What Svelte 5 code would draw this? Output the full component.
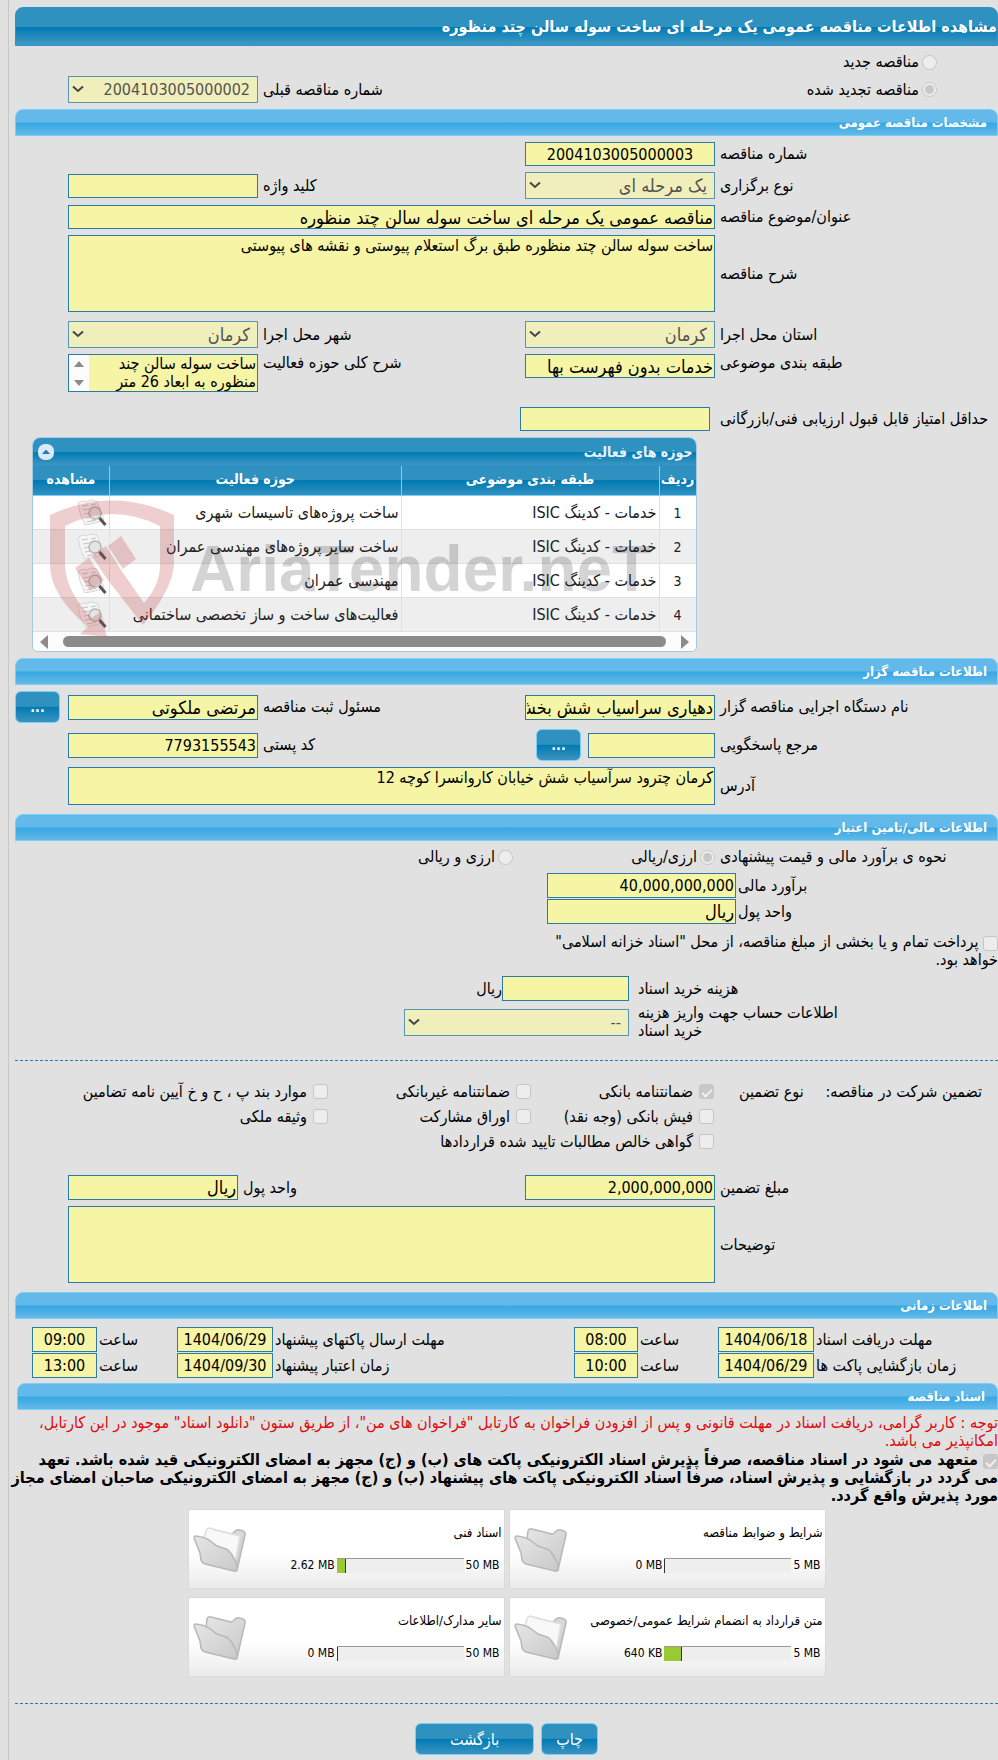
<script lang="ts">
  const activities = [
    "ساخت پروژه‌های تاسیسات شهری",
    "ساخت سایر پروژه‌های مهندسی عمران",
    "مهندسی عمران",
    "فعالیت‌های ساخت و ساز تخصصی ساختمانی",
  ];

  const guarantees = [
    { id: "bank", label: "ضمانتنامه بانکی", checked: true },
    { id: "nonbank", label: "ضمانتنامه غیربانکی" },
    { id: "article", label: "موارد بند پ ، ح و خ آیین نامه تضامین" },
    { id: "cash", label: "فیش بانکی (وجه نقد)" },
    { id: "bonds", label: "اوراق مشارکت" },
    { id: "estate", label: "وثیقه ملکی" },
    { id: "claims", label: "گواهی خالص مطالبات تایید شده قراردادها", wide: true },
  ];

  const schedule = [
    { id: "receive", label: "مهلت دریافت اسناد", date: "1404/06/18", time: "08:00" },
    { id: "send", label: "مهلت ارسال پاکتهای پیشنهاد", date: "1404/06/29", time: "09:00" },
    { id: "open", label: "زمان بازگشایی پاکت ها", date: "1404/06/29", time: "10:00" },
    { id: "valid", label: "زمان اعتبار پیشنهاد", date: "1404/09/30", time: "13:00" },
  ];

  const documents = [
    { title: "شرایط و ضوابط مناقصه", used: "0 MB", max: "5 MB", percent: 0 },
    { title: "اسناد فنی", used: "2.62 MB", max: "50 MB", percent: 7 },
    { title: "متن قرارداد به انضمام شرایط عمومی/خصوصی", used: "640 KB", max: "5 MB", percent: 13 },
    { title: "سایر مدارک/اطلاعات", used: "0 MB", max: "50 MB", percent: 0 },
  ];
</script>

{#snippet dropdown(id: string, value: string, isText = true)}
  <span class="dropdown">
    <select {id} class:text={isText} disabled>
      <option>{value}</option>
    </select>
    <svg viewBox="0 0 12 8" aria-hidden="true"><path d="M1 1.500 6 6l5-4.500" /></svg>
  </span>
{/snippet}

<main>
  <h1>مشاهده اطلاعات مناقصه عمومی یک مرحله ای ساخت سوله سالن چتد منظوره</h1>

  <div class="kind">
    <div class="row">
      <div class="choice">
        <input type="radio" id="kindNew" name="kind" disabled />
        <label for="kindNew">مناقصه جدید</label>
      </div>
    </div>
    <div class="row">
      <div class="choice">
        <input type="radio" id="kindRenewed" name="kind" checked disabled />
        <label for="kindRenewed">مناقصه تجدید شده</label>
      </div>
      <label class="caption" for="previous">شماره مناقصه قبلی</label>
      {@render dropdown("previous", "2004103005000002", false)}
    </div>
  </div>

  <h2>مشخصات مناقصه عمومی</h2>
  <section class="rows">
    <div class="row">
      <label class="caption" for="number">شماره مناقصه</label>
      <input class="centered" id="number" value="2004103005000003" readonly />
    </div>
    <div class="row">
      <label class="caption" for="holding">نوع برگزاری</label>
      {@render dropdown("holding", "یک مرحله ای")}
      <label class="caption" for="keyword">کلید واژه</label>
      <input id="keyword" readonly />
    </div>
    <div class="row">
      <label class="caption" for="subject">عنوان/موضوع مناقصه</label>
      <input class="wide text" id="subject" value="مناقصه عمومی یک مرحله ای ساخت سوله سالن چتد منظوره" readonly />
    </div>
    <div class="row tall">
      <label class="caption" for="description">شرح مناقصه</label>
      <textarea class="wide big" id="description" readonly>ساخت سوله سالن چتد منظوره طبق برگ استعلام پیوستی و نقشه های پیوستی</textarea>
    </div>
    <div class="row">
      <label class="caption" for="province">استان محل اجرا</label>
      {@render dropdown("province", "کرمان")}
      <label class="caption" for="city">شهر محل اجرا</label>
      {@render dropdown("city", "کرمان")}
    </div>
    <div class="row top">
      <label class="caption" for="category">طبقه بندی موضوعی</label>
      <input class="text" id="category" value="خدمات بدون فهرست بها" readonly />
      <label class="caption" for="scope">شرح کلی حوزه فعالیت</label>
      <div class="scroller">
        <textarea id="scope" readonly>ساخت سوله سالن چند منظوره به ابعاد 26 متر</textarea>
        <svg viewBox="0 0 20 36" aria-hidden="true"><path d="M5 12h10l-5-6zM5 25h10l-5 6z" /></svg>
      </div>
    </div>
    <div class="row score">
      <label class="caption" for="score">حداقل امتیاز قابل قبول ارزیابی فنی/بازرگانی</label>
      <input id="score" readonly />
    </div>
  </section>

  <div class="activities">
    <div class="gridTitle">
      <span>حوزه های فعالیت</span>
      <button class="collapse" aria-label="بستن">
        <svg viewBox="0 0 16 16"><path d="M4 10h8L8 5.500z" /></svg>
      </button>
    </div>
    <table>
      <thead>
        <tr>
          <th class="index">ردیف</th>
          <th class="category">طبقه بندی موضوعی</th>
          <th>حوزه فعالیت</th>
          <th class="view">مشاهده</th>
        </tr>
      </thead>
      <tbody>
        {#each activities as activity, i}
          <tr>
            <td class="index">{i + 1}</td>
            <td>خدمات - کدینگ ISIC</td>
            <td>{activity}</td>
            <td class="view">
              <svg viewBox="0 0 30 28" aria-hidden="true">
                <path class="sheet" d="M1 4 6 2l4 1 3-2 7 1 7 19-9 3-10 2Q2 15 1 4z" />
                <path class="lines" d="m5 7 6-1M6 11l6-1M7 15l6-1M8 19l7-1M10 23l9-2M14 6l5-1" />
                <circle cx="18" cy="14" r="6" />
                <path class="handle" d="m22.500 19 6 7" />
              </svg>
            </td>
          </tr>
        {/each}
      </tbody>
    </table>
    <div class="track">
      <svg viewBox="0 0 8 14" aria-hidden="true"><path d="M0 0v14l8-7z" /></svg>
      <div class="thumb"></div>
      <svg viewBox="0 0 8 14" aria-hidden="true"><path d="M8 0v14L0 7z" /></svg>
    </div>
    <div class="watermark">
      <svg viewBox="0 0 126 138" aria-hidden="true">
        <path d="M0 15Q62-14 124 15V65Q122 90 93 125L57 79 42 56 56 46 71 70 94 103Q110 85 110 65V26Q62 2 15 26V65Q16 92 42 118L50 112 57 137 30 134 38 127Q0 95 0 65z" />
        <path d="m25 68 14-10 15 22-14 10zM58 46l13-10 15 23-13 10z" />
      </svg>
      <span>AriaTender.neT</span>
    </div>
  </div>

  <h2>اطلاعات مناقصه گزار</h2>
  <section class="holder">
    <div class="row">
      <label class="caption" for="agency">نام دستگاه اجرایی مناقصه گزار</label>
      <input class="text" id="agency" value="دهیاری سراسیاب شش بخش مرکزی" readonly />
      <label class="caption" for="registrar">مسئول ثبت مناقصه</label>
      <input class="text" id="registrar" value="مرتضی ملکوتی" readonly />
      <button class="more">...</button>
    </div>
    <div class="row">
      <label class="caption" for="contact">مرجع پاسخگویی</label>
      <div class="withButton">
        <input id="contact" readonly />
        <button class="more">...</button>
      </div>
      <label class="caption" for="postal">کد پستی</label>
      <input id="postal" value="7793155543" readonly />
    </div>
    <div class="row">
      <label class="caption" for="address">آدرس</label>
      <textarea class="wide" id="address" readonly>کرمان چترود سرآسیاب شش خیابان کاروانسرا کوچه 12</textarea>
    </div>
  </section>

  <h2>اطلاعات مالی/تامین اعتبار</h2>
  <section class="finance">
    <div class="method">
      <span class="caption">نحوه ی برآورد مالی و قیمت پیشنهادی</span>
      <div class="choice">
        <input type="radio" id="single" name="currency" checked disabled />
        <label for="single">ارزی/ریالی</label>
      </div>
      <div class="choice">
        <input type="radio" id="both" name="currency" disabled />
        <label for="both">ارزی و ریالی</label>
      </div>
    </div>
    <div class="estimate">
      <label class="caption" for="estimate">برآورد مالی</label>
      <input id="estimate" value="40,000,000,000" readonly />
      <label class="caption" for="unit">واحد پول</label>
      <input class="text" id="unit" value="ریال" readonly />
    </div>
    <div class="treasury">
      <input type="checkbox" id="treasury" disabled />
      <label for="treasury">پرداخت تمام و یا بخشی از مبلغ مناقصه، از محل "اسناد خزانه اسلامی" خواهد بود.</label>
    </div>
    <div class="fees">
      <label class="caption" for="fee">هزینه خرید اسناد</label>
      <div class="fee"><input id="fee" readonly />ریال</div>
      <label class="caption" for="account">اطلاعات حساب جهت واریز هزینه خرید اسناد</label>
      {@render dropdown("account", "--", false)}
    </div>
  </section>

  <hr />

  <section class="guarantee">
    <div class="guaranteeTypes">
      <div class="guaranteeTitle"><span>تضمین شرکت در مناقصه:</span><span>نوع تضمین</span></div>
      <div class="options">
        {#each guarantees as item}
          <div class="choice" class:span={item.wide}>
            <input type="checkbox" id={item.id} checked={item.checked} disabled />
            <label for={item.id}>{item.label}</label>
          </div>
        {/each}
      </div>
    </div>
    <div class="row amount">
      <label class="caption" for="amount">مبلغ تضمین</label>
      <input id="amount" value="2,000,000,000" readonly />
      <label class="caption" for="amountUnit">واحد پول</label>
      <input class="text" id="amountUnit" value="ریال" readonly />
    </div>
    <div class="row">
      <label class="caption" for="notes">توضیحات</label>
      <textarea class="wide big" id="notes" readonly></textarea>
    </div>
  </section>

  <h2>اطلاعات زمانی</h2>
  <section class="schedule">
    {#each schedule as item}
      <label class="caption" for="{item.id}Date">{item.label}</label>
      <input class="centered" id="{item.id}Date" value={item.date} readonly />
      <label class="caption" for="{item.id}Time">ساعت</label>
      <input class="centered" id="{item.id}Time" value={item.time} readonly />
    {/each}
  </section>

  <h2 class="inset">اسناد مناقصه</h2>
  <section class="documents">
    <p class="notice">توجه : کاربر گرامی، دریافت اسناد در مهلت قانونی و پس از افزودن فراخوان به کارتابل "فراخوان های من"، از طریق ستون "دانلود اسناد" موجود در این کارتابل، امکانپذیر می باشد.</p>
    <div class="pledge">
      <input type="checkbox" id="pledge" checked disabled />
      <label for="pledge">
        متعهد می شود در اسناد مناقصه، صرفاً پذیرش اسناد الکترونیکی پاکت های (ب) و (ج) مجهز به امضای الکترونیکی قید شده باشد. تعهد<br />
        می گردد در بازگشایی و پذیرش اسناد، صرفاً اسناد الکترونیکی پاکت های پیشنهاد (ب) و (ج) مجهز به امضای الکترونیکی صاحبان امضای مجاز<br />
        مورد پذیرش واقع گردد.
      </label>
    </div>
    <div class="cards">
      {#each documents as doc}
        <article>
          <div class="info">
            <h3>{doc.title}</h3>
            <div class="usage">
              <span>{doc.max}</span>
              <div class="meter"><div class="fill" style="width: {doc.percent}%"></div></div>
              <span>{doc.used}</span>
            </div>
          </div>
          <svg viewBox="0 0 54 48" aria-hidden="true">
            <defs>
              <linearGradient id="folder" x1="0" y1="0" x2="1" y2="1">
                <stop offset="0" stop-color="#e6e6e6" />
                <stop offset="1" stop-color="#c9c9c9" />
              </linearGradient>
            </defs>
            <path class="back" d="M11 30 14 4q1-3 4-2l20 5q2 0 3-2 3-3 6-2 6 1 5 5L44 43z" />
            {#if doc.percent > 0}
              <path class="paper" d="m10 14 3-10q1-3 4-3l5 2 25 6-5 27z" />
            {/if}
            <path class="front" d="M3 9q8 1 13 4l8 6 9 3q3 1 6 6l4 7q2 4 1 8-1 2-3 1L12 37q-3-1-4-4L7 26 1 11q0-2 2-2z" />
          </svg>
        </article>
      {/each}
    </div>
  </section>

  <hr />

  <footer>
    <button>چاپ</button>
    <button class="return">بازگشت</button>
  </footer>
</main>

<style>
  :global(body) {
    background: #e1e1e1;
  }

  main {
    direction: rtl;
    box-sizing: border-box;
    margin-left: 8px;
    padding: 7px 0 5px 6px;
    border-left: 1px solid #c8c8c8;
    overflow: hidden;
    font: 16px/18px "DejaVu Sans Condensed", "DejaVu Sans", sans-serif;
    color: #000;
  }

  h1,
  h2,
  h3,
  p {
    margin: 0;
  }

  h1 {
    box-sizing: border-box;
    height: 39px;
    border: 1px solid #318fd0;
    border-radius: 8px 8px 0 0;
    background: linear-gradient(#2f91bf 50%, #007ab2 52%, #4199c3);
    color: #fff;
    font-size: 16px;
    line-height: 37px;
    white-space: nowrap;
  }

  h2 {
    box-sizing: border-box;
    height: 27px;
    padding-right: 10px;
    border: 1px solid #76d0f7;
    border-radius: 8px 8px 0 0;
    background: linear-gradient(#63b9e9 48%, #36a7e2 52%, #63b9e9);
    color: #fff;
    font-size: 13px;
    line-height: 25px;
  }

  h2.inset {
    margin-left: 2px;
    padding-right: 12px;
  }

  hr {
    margin: 0;
    border: 0;
    border-top: 1px dashed #2b7ba8;
  }

  input,
  textarea,
  select {
    box-sizing: border-box;
    width: 100%;
    min-width: 0;
    margin: 0;
    border: 1px solid #2b7ba8;
    border-radius: 0;
    background: #f6f4a5;
    color: #000;
    font-family: inherit;
    font-size: 16px;
  }

  input {
    height: 25px;
    padding: 1px;
  }

  textarea {
    display: block;
    height: 38px;
    padding: 1px;
    line-height: 18px;
    resize: none;
    overflow: hidden;
  }

  textarea.big {
    height: 77px;
  }

  .text {
    font-size: 18px;
  }

  .centered {
    text-align: center;
  }

  input[type="radio"],
  input[type="checkbox"] {
    appearance: none;
    display: inline-grid;
    place-content: center;
    flex: none;
    width: 15px;
    height: 15px;
    padding: 0;
    border: 1px solid #c6c6c6;
    border-radius: 3px;
    background: #ededed;
  }

  input[type="radio"] {
    border-radius: 50%;
  }

  input[type="radio"]:checked::after {
    content: "";
    width: 9px;
    height: 9px;
    border-radius: 50%;
    background: #c8c8c8;
  }

  input[type="checkbox"]:checked {
    background: #c8c8c8;
  }

  input[type="checkbox"]:checked::after {
    content: "";
    width: 4px;
    height: 8px;
    border: solid #f0f0f0;
    border-width: 0 2px 2px 0;
    transform: rotate(45deg);
  }

  .dropdown {
    position: relative;
    display: block;
    opacity: 0.75;
  }

  .dropdown select {
    appearance: none;
    display: block;
    height: 27px;
    padding: 0 7px;
    background: #f6f4b0;
    color: #222;
    opacity: 1;
  }

  .dropdown svg {
    position: absolute;
    left: 4px;
    top: 9px;
    width: 12px;
    height: 8px;
    fill: none;
    stroke: #111;
    stroke-width: 2;
  }

  .row {
    display: grid;
    grid-template-columns: minmax(0, 283fr) minmax(0, 190fr) minmax(0, 267fr) minmax(0, 190fr) minmax(0, 53fr);
    align-items: center;
  }

  .row.amount {
    grid-template-columns: minmax(0, 283fr) minmax(0, 190fr) minmax(0, 287fr) minmax(0, 170fr) minmax(0, 53fr);
  }

  .row .wide {
    grid-column: 2 / 5;
  }

  .row.top {
    align-items: start;
  }

  .caption {
    padding-left: 5px;
    text-align: left;
  }

  .choice {
    display: flex;
    align-items: center;
    gap: 3px;
    white-space: nowrap;
  }

  .kind {
    padding: 2px 0 6px;
  }

  .kind .row:first-child {
    height: 28px;
  }

  .kind .choice {
    grid-column: 1 / 3;
    padding-right: 61px;
  }

  .rows,
  .holder,
  .guarantee {
    display: flex;
    flex-direction: column;
    gap: 6px;
  }

  .rows {
    padding: 6px 0;
  }

  .rows input {
    height: 24px;
  }

  .rows .tall {
    margin-bottom: 3px;
  }

  .rows .score {
    margin-top: 9px;
  }

  .rows .score input {
    margin-right: 5px;
  }

  .scroller {
    display: flex;
    border: 1px solid #2b7ba8;
  }

  .scroller textarea {
    height: 36px;
    padding: 0 1px;
    border: 0;
  }

  .scroller svg {
    flex: none;
    width: 20px;
    height: 36px;
    background: #fcfcfc;
    fill: #8b8b8b;
  }

  .activities {
    position: relative;
    box-sizing: border-box;
    width: 67.6%;
    margin: 0 auto 6px 17px;
    border: 1px solid #a3c9e3;
    border-radius: 8px 8px 5px 5px;
    background: #fcfcfc;
    overflow: hidden;
  }

  .gridTitle {
    display: flex;
    align-items: center;
    justify-content: space-between;
    height: 27px;
    padding: 0 3px 0 5px;
    border-bottom: 1px solid #318fd0;
    background: linear-gradient(#2f91bf 50%, #007ab2 52%, #3d96c2);
    color: #e8f4fb;
    font-size: 14px;
    font-weight: bold;
  }

  .collapse {
    width: 16px;
    height: 16px;
    padding: 0;
    border: 0;
    border-radius: 7px;
    background: #dbe9f8;
  }

  .collapse svg {
    display: block;
    fill: #1d7fb3;
  }

  table {
    width: 100%;
    border-collapse: collapse;
    table-layout: fixed;
    font-size: 16px;
  }

  th {
    height: 25px;
    padding: 0 0 4px;
    border-left: 1px solid #76d0f7;
    border-bottom: 1px solid #76d0f7;
    background: linear-gradient(#2f91bf 48%, #007ab2 50%, #3290c0);
    color: #fff;
    font-size: 14px;
  }

  td {
    height: 33px;
    padding: 0 2px;
    border-left: 1px solid #e0e0e0;
    border-bottom: 1px solid #e0e0e0;
    background: #fff;
    color: #222;
    white-space: nowrap;
  }

  tr:nth-child(even) td {
    background: #eee;
  }

  th:last-child,
  td:last-child {
    border-left: 0;
  }

  .index {
    width: 36px;
    text-align: center;
    font-size: 14px;
  }

  td.index {
    padding: 0;
  }

  th.category {
    width: 257px;
  }

  th.view {
    width: 76px;
  }

  td svg {
    display: block;
    width: 30px;
    height: 28px;
  }

  .sheet {
    fill: #f5f5f5;
    stroke: #d8d8d8;
  }

  .lines {
    fill: none;
    stroke: #c4c4c4;
  }

  td circle {
    fill: #e5e5e5;
    stroke: #b5b5b5;
    stroke-width: 1.5;
  }

  .handle {
    stroke: #555;
    stroke-width: 3;
  }

  .track {
    display: flex;
    align-items: center;
    gap: 15px;
    height: 19px;
    padding: 0 7px;
  }

  .track svg {
    flex: none;
    width: 8px;
    height: 14px;
    fill: #8b8b8b;
  }

  .thumb {
    flex: 1;
    height: 11px;
    border-radius: 6px;
    background: #8b8b8b;
  }

  /* Site mark laid over the activities grid. */
  .watermark {
    position: absolute;
    left: 17px;
    top: 62px;
    display: flex;
    direction: ltr;
    align-items: center;
    gap: 14px;
    pointer-events: none;
  }

  .watermark svg {
    width: 126px;
    height: 138px;
    fill: rgba(190, 50, 60, 0.24);
  }

  .watermark span {
    color: rgba(0, 0, 0, 0.17);
    font: bold 64px/72px "Liberation Sans", sans-serif;
  }

  button {
    height: 32px;
    padding: 0 14px;
    border: 1px solid #76d0f7;
    border-radius: 6px;
    background: linear-gradient(#2f91bf 48%, #007ab2 50%, #3a94c1);
    color: #fff;
    font-family: inherit;
    font-size: 16px;
  }

  button.more {
    flex: none;
    justify-self: end;
    width: 45px;
    padding: 0;
    font-size: 14px;
    font-weight: bold;
  }

  .holder {
    padding: 6px 0 9px;
  }

  .withButton {
    display: flex;
    align-items: center;
    gap: 7px;
  }

  .withButton input {
    width: 127px;
  }

  .finance {
    padding: 4px 0 20px;
  }

  .method {
    display: grid;
    grid-template-columns: minmax(0, 283fr) minmax(0, 202fr) minmax(0, 498fr);
    align-items: center;
    height: 24px;
  }

  .estimate {
    display: grid;
    grid-template-columns: minmax(0, 262fr) minmax(0, 189fr) minmax(0, 532fr);
    gap: 1px 0;
    align-items: center;
    padding: 4px 0 9px;
  }

  .estimate .caption {
    grid-column: 1;
    padding-left: 2px;
  }

  .treasury {
    width: 48%;
  }

  .treasury input,
  .pledge input {
    vertical-align: bottom;
  }

  .fees {
    display: grid;
    grid-template-columns: minmax(0, 369fr) minmax(0, 225fr) minmax(0, 389fr);
    gap: 3px 0;
    align-items: center;
    padding-top: 7px;
  }

  .fees .caption {
    grid-column: 1;
    padding-right: 140px;
    padding-left: 9px;
  }

  .fee {
    display: flex;
    align-items: center;
  }

  .fee input {
    width: 127px;
  }

  .guarantee {
    padding: 18px 0 9px;
  }

  .guaranteeTypes {
    display: flex;
    padding-bottom: 15px;
    line-height: 25px;
  }

  .guaranteeTitle {
    box-sizing: border-box;
    display: flex;
    justify-content: space-between;
    width: 284px;
    padding: 0 16px 0 25px;
  }

  .options {
    flex: 1;
    display: grid;
    grid-template-columns: 183px 203px 1fr;
  }

  .options .choice {
    gap: 6px;
  }

  .options .span {
    grid-column: span 2;
  }

  .schedule {
    display: grid;
    grid-template-columns: minmax(0, 184fr) 96px minmax(0, 80fr) 64px minmax(0, 301fr) 96px minmax(0, 80fr) 65px;
    gap: 1px 0;
    align-items: center;
    padding: 8px 0 5px 17px;
  }

  .schedule .caption {
    padding-left: 2px;
  }

  .notice {
    padding: 4px 0 1px;
    color: #dd0b0b;
  }

  .pledge {
    font-weight: bold;
    white-space: nowrap;
  }

  .cards {
    display: grid;
    grid-template-columns: 317px 317px;
    justify-content: center;
    gap: 8px 4px;
    padding: 4px 0 26px;
  }

  article {
    box-sizing: border-box;
    display: flex;
    justify-content: space-between;
    height: 80px;
    padding: 14px 2px 0 4px;
    border: 1px solid #dadada;
    background: linear-gradient(#fff 55%, #ebebeb);
  }

  article svg {
    flex: none;
    width: 54px;
    height: 48px;
    margin-top: 3px;
    stroke: #b8b8b8;
    stroke-width: 1.5;
  }

  article .back,
  article .front {
    fill: url(#folder);
  }

  article .paper {
    fill: #f8f8f8;
    stroke: #e0e0e0;
  }

  h3 {
    font-size: 13px;
    font-weight: normal;
    line-height: 18px;
    white-space: nowrap;
  }

  .usage {
    display: flex;
    align-items: center;
    direction: ltr;
    flex-direction: row-reverse;
    justify-content: flex-start;
    gap: 2px;
    margin-top: 14px;
    padding-right: 2px;
    font-size: 12px;
  }

  .meter {
    box-sizing: border-box;
    width: 127px;
    height: 15px;
    border-top: 1px solid #999;
    background: #eee;
  }

  .fill {
    height: 14px;
    border-right: 1px solid #333;
    background: #9aca32;
  }

  footer {
    display: flex;
    justify-content: center;
    gap: 7px;
    padding-top: 19px;
  }

  footer .return {
    padding: 0 34px;
  }
</style>
